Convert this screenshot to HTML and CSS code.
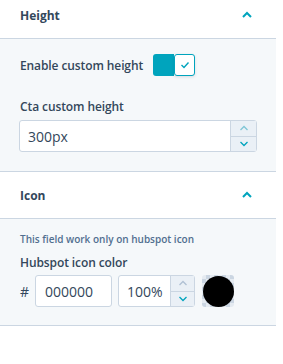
FILE: index.html
```html
<!DOCTYPE html>
<html lang="en">
  <head>
    <meta charset="UTF-8" />
    <title>Module fields</title>
    <link rel="stylesheet" href="styles.css">
  </head>
  <body>
    <div class="panel">
      <div class="section">
        <div class="section-head">
          <span class="section-title">Height</span>
          <svg class="chevron" width="12" height="8" viewBox="0 0 12 8"><path d="M2 6 L6 2 L10 6" /></svg>
        </div>
        <div class="section-body">
          <div class="toggle-row">
            <span class="label">Enable custom height</span>
            <div class="toggle">
              <div class="toggle-on"></div>
              <div class="toggle-knob">
                <svg width="10" height="8" viewBox="0 0 10 8"><path d="M1.5 4 L4 6.5 L8.5 1.5" /></svg>
              </div>
            </div>
          </div>
          <div class="label field-label">Cta custom height</div>
          <div class="number-input wide">
            <span class="value">300px</span>
            <div class="stepper">
              <div class="step up"><svg width="10" height="6" viewBox="0 0 10 6"><path d="M1.5 5 L5 1.5 L8.5 5" /></svg></div>
              <div class="step down"><svg width="10" height="6" viewBox="0 0 10 6"><path d="M1.5 1 L5 4.5 L8.5 1" /></svg></div>
            </div>
          </div>
        </div>
      </div>

      <div class="section">
        <div class="section-head">
          <span class="section-title">Icon</span>
          <svg class="chevron" width="12" height="8" viewBox="0 0 12 8"><path d="M2 6 L6 2 L10 6" /></svg>
        </div>
        <div class="section-body icon-body">
          <div class="help">This field work only on hubspot icon</div>
          <div class="label color-label">Hubspot icon color</div>
          <div class="color-row">
            <span class="hash">#</span>
            <div class="text-input hex">000000</div>
            <div class="number-input percent">
              <span class="value">100%</span>
              <div class="stepper">
                <div class="step up disabled"><svg width="10" height="6" viewBox="0 0 10 6"><path d="M1.5 5 L5 1.5 L8.5 5" /></svg></div>
                <div class="step down"><svg width="10" height="6" viewBox="0 0 10 6"><path d="M1.5 1 L5 4.5 L8.5 1" /></svg></div>
              </div>
            </div>
            <div class="swatch"><div class="swatch-dot"></div></div>
          </div>
        </div>
      </div>
    </div>
  </body>
</html>
```

FILE: styles.css
```css
body {
  margin: 0;
  background: #fff;
  font-family: "Open Sans", "Liberation Sans", sans-serif;
  color: #33475b;
}
.panel {
  width: 276px;
  margin-top: -8px;
}
.section-head {
  display: flex;
  align-items: center;
  justify-content: space-between;
  padding: 0 23px 0 20px;
  border-bottom: 1px solid #cbd6e2;
  box-sizing: border-box;
  height: 47px;
}
.section-title {
  font-size: 12px;
  font-weight: 700;
}
.chevron path {
  fill: none;
  stroke: #00a4bd;
  stroke-width: 2;
}
.section-body {
  background: #f5f8fa;
  border-bottom: 1px solid #cbd6e2;
  padding: 15px 19px 19px 19px;
}
.label {
  font-size: 12px;
  font-weight: 600;
  padding-left: 1px;
  letter-spacing: -0.1px;
}
.toggle-row {
  display: flex;
  align-items: center;
  gap: 10px;
}
.toggle {
  display: flex;
  width: 42px;
  height: 22px;
}
.toggle-on {
  flex: 1;
  background: #00a4bd;
  border-radius: 3px 0 0 3px;
}
.toggle-knob {
  width: 21px;
  height: 22px;
  box-sizing: border-box;
  border: 1px solid #00a4bd;
  border-radius: 3px;
  background: #fff;
  display: flex;
  align-items: center;
  justify-content: center;
  box-shadow: 0 1px 3px rgba(45, 62, 80, 0.15);
}
.toggle-knob path {
  fill: none;
  stroke: #00a4bd;
  stroke-width: 1.4;
}
.field-label {
  margin-top: 22px;
  line-height: 18px;
}
.number-input,
.text-input {
  display: flex;
  height: 32px;
  box-sizing: border-box;
  border: 1px solid #cbd6e2;
  border-radius: 3px;
  background: #fff;
  font-size: 14px;
}
.wide {
  margin-top: 4px;
  width: 238px;
}
.value {
  flex: 1;
  align-self: center;
  padding-left: 8px;
}
.stepper {
  width: 25px;
  display: flex;
  flex-direction: column;
  border-left: 1px solid #cbd6e2;
  background: #eaf0f6;
}
.step {
  flex: 1;
  display: flex;
  align-items: center;
  justify-content: center;
}
.step.up {
  border-bottom: 1px solid #cbd6e2;
}
.step path {
  fill: none;
  stroke: #00a4bd;
  stroke-width: 1.3;
}
.step.up path {
  stroke: #7fc6d6;
}
.step.disabled path {
  stroke: #b0c1d4;
}
.icon-body {
  padding-top: 13px;
  padding-bottom: 18px;
}
.help {
  font-size: 10px;
  font-weight: 600;
  color: #516f90;
  padding-left: 1px;
  line-height: 14px;
}
.color-label {
  margin-top: 8px;
  line-height: 18px;
}
.color-row {
  display: flex;
  align-items: center;
  margin-top: 3px;
}
.hash {
  font-size: 14px;
  width: 15px;
  padding-left: 1px;
}
.hex {
  width: 77px;
  align-items: center;
  padding-left: 9px;
}
.percent {
  width: 77px;
  margin-left: 6px;
}
.percent .stepper {
  width: 23px;
}
.swatch {
  width: 32px;
  height: 32px;
  margin-left: 7px;
  border-radius: 3px;
  background: repeating-conic-gradient(#cbd6e2 0 25%, #e5ebf1 0 50%) 0 0 / 8px 8px;
  display: flex;
  align-items: center;
  justify-content: center;
}
.swatch-dot {
  width: 31px;
  height: 31px;
  border-radius: 50%;
  background: #000;
}
```
